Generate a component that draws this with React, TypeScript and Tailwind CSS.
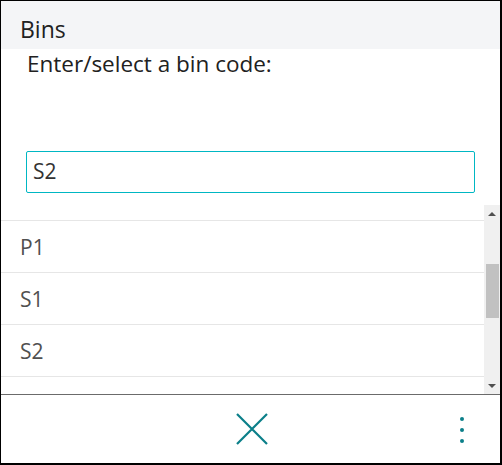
const ROWS = ['P0', 'P1', 'S1', 'S2', 'S3'];

function Scrollbar() {
  return (
    <div className="flex w-[16px] shrink-0 flex-col bg-[#f0f0f0]">
      <div className="flex h-[17px] items-center justify-center">
        <div className="h-0 w-0 border-x-[4px] border-b-[4px] border-x-transparent border-b-[#505050]" />
      </div>
      <div className="mt-[42px] ml-[2px] h-[54px] w-[13px] bg-[#c1c1c1]" />
      <div className="flex-1" />
      <div className="flex h-[17px] items-center justify-center">
        <div className="h-0 w-0 border-x-[4px] border-t-[4px] border-x-transparent border-t-[#505050]" />
      </div>
    </div>
  );
}

export default function App() {
  return (
    <div
      className="flex h-[465px] w-[502px] flex-col border-t border-l border-r-2 border-b-2 border-black bg-white text-[#212121]"
      style={{ fontFamily: '"Open Sans", "Noto Sans", sans-serif' }}
    >
      {/* Header */}
      <div className="flex h-[48px] shrink-0 items-end bg-[#f4f5f7] pb-[8px] pl-[19px]">
        <span className="text-[23px] leading-none">Bins</span>
      </div>

      <div className="pl-[26px] pt-[2px] text-[22.5px] leading-[26px]">Enter/select a bin code:</div>

      {/* Input */}
      <div className="mt-[74px] px-[25px]">
        <div className="flex h-[42px] items-center rounded-[2px] border border-[#00b7c3] px-[6px] text-[21px] text-[#333]">
          S2
        </div>
      </div>

      {/* List */}
      <div className="mt-[12px] flex h-[189px] shrink-0 overflow-hidden">
        <div className="flex-1 overflow-hidden">
          <div className="-mt-[36px]">
            {ROWS.map(r => (
              <div
                key={r}
                className="flex h-[52px] items-center border-b border-[#e6e6e6] pt-[2px] pl-[19px] text-[21px] text-[#505050]"
              >
                {r === 'P0' || r === 'S3' ? '' : r}
              </div>
            ))}
          </div>
        </div>
        <Scrollbar />
      </div>

      {/* Footer */}
      <div className="relative flex flex-1 items-center justify-center border-t border-[#6b6b6b]">
        <svg width="32" height="32" viewBox="0 0 32 32" className="ml-[2px]">
          <path d="M1 1 L31 31 M31 1 L1 31" stroke="#0b7f89" strokeWidth="2.2" fill="none" />
        </svg>
        <div className="absolute right-[36px] top-[22px] flex flex-col gap-[7px]">
          <span className="h-[4px] w-[4px] rounded-full bg-[#0b7f89]" />
          <span className="h-[4px] w-[4px] rounded-full bg-[#0b7f89]" />
          <span className="h-[4px] w-[4px] rounded-full bg-[#0b7f89]" />
        </div>
      </div>
    </div>
  );
}
